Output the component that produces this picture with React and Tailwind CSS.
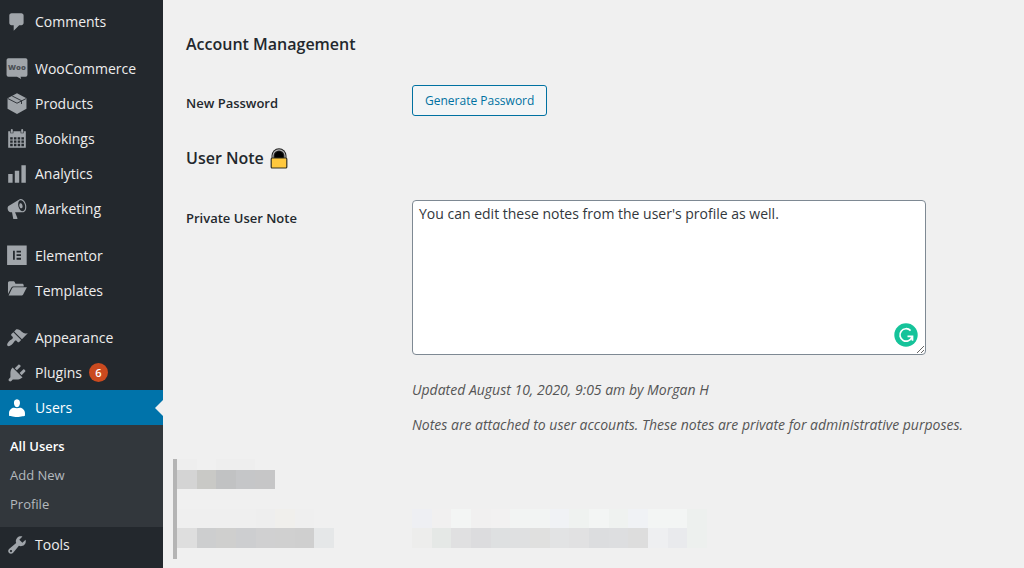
import { useState } from "react";

const Icon = ({ children }) => (
  <svg
    viewBox="0 0 20 20"
    className="h-[22px] w-[22px] shrink-0 fill-current"
    aria-hidden="true"
  >
    {children}
  </svg>
);

const icons = {
  comments: (
    <path d="M5 2h9c1.1 0 2 .9 2 2v7c0 1.1-.9 2-2 2h-2l-5 5v-5H5c-1.1 0-2-.9-2-2V4c0-1.1.9-2 2-2z" />
  ),
  woo: (
    <>
      <path d="M2.2 .2h15.600a1.700 1.700 0 0 1 1.700 1.700v13.400a1.700 1.700 0 0 1-1.700 1.700h-4.600l.6 2.200-3.800-2.200H2.200a1.700 1.700 0 0 1-1.700-1.700V1.900A1.700 1.700 0 0 1 2.200 .2z" />
      <text
        x="10"
        y="11"
        textAnchor="middle"
        fontSize="7"
        fontWeight="800"
        fontFamily="Open Sans, sans-serif"
        fill="#4a4f54"
      >
        Woo
      </text>
    </>
  ),
  products: (
    <>
      <path d="M10 .2l8.600 4.500v9.700L10 19.200l-8.600-4.800V4.700z" />
      <path
        d="M1.600 5L10 9.300l8.400-4.300M5.600 2.700l8.500 4.300v3"
        fill="none"
        stroke="#23282d"
        strokeWidth=".8"
      />
    </>
  ),
  bookings: (
    <path
      fillRule="evenodd"
      d="M2 3h1.900v1.800h2.800V3h6.600v1.800h2.800V3H18v15H2zM4.400 1.900a.9.9 0 0 1 1.800 0v2.400H4.400zm9.400 0a.9.9 0 0 1 1.800 0v2.400h-1.800zM3.800 8.400v2.100h2.300V8.400zm3.400 0v2.100h2.300V8.400zm3.400 0v2.100h2.300V8.400zm3.400 0v2.100h2.300V8.400zM3.800 11.400v2.100h2.300v-2.100zm3.400 0v2.100h2.300v-2.100zm3.400 0v2.100h2.300v-2.100zm3.400 0v2.100h2.300v-2.100zM3.800 14.400v2.100h2.300v-2.100zm3.400 0v2.100h2.300v-2.100zm3.400 0v2.100h2.300v-2.100zm3.400 0v2.100h2.300v-2.100z"
    />
  ),
  analytics: <path d="M18 18V2h-4v16h4zm-6 0V7H8v11h4zm-6 0v-8H2v8h4z" />,
  marketing: (
    <path d="M18.150 5.940c.46 1.620.38 3.220-.02 4.480-.42 1.280-1.260 2.180-2.300 2.480-.16.06-.26.06-.4.06-.06.02-.12.02-.18.02-.06.02-.14.02-.22.02h-6.800l2.220 5.500c.02.14-.06.26-.14.34-.08.1-.24.16-.34.16H6.950c-.1 0-.26-.06-.34-.16-.08-.08-.16-.2-.14-.34l-1-5.500H4.250l-.02-.02c-.5.06-1.080-.18-1.540-.62s-.88-1.080-1.060-1.880c-.24-.8-.2-1.560-.02-2.200.18-.62.58-1.080 1.060-1.300l.02-.02 9-5.400c.1-.06.18-.1.24-.16.06-.04.14-.08.24-.12.16-.08.28-.12.5-.18 1.040-.3 2.240.1 3.220.98s1.840 2.240 2.260 3.860zm-2.580 5.980h-.02c.4-.1.74-.34 1.040-.7.58-.7.86-1.760.86-3.040 0-.64-.1-1.300-.28-1.980-.34-1.360-1.020-2.500-1.780-3.240s-1.680-1.100-2.460-.88c-.82.22-1.400.96-1.700 2-.32 1.040-.28 2.360.06 3.720.38 1.360 1 2.500 1.800 3.240.78.74 1.620 1.100 2.480.88zm-2.540-7.080c.22-.04.42-.02.62.04.38.16.76.48 1.020 1s.42 1.200.42 1.780c0 .3-.04.56-.12.8-.18.48-.44.84-.86.94-.34.1-.8-.06-1.140-.4s-.64-.86-.78-1.500c-.18-.62-.12-1.240.02-1.720s.48-.84.82-.94z" />
  ),
  elementor: (
    <path
      fillRule="evenodd"
      d="M1 .4h17.800v17.800H1zM6.400 5.300v8H8v-8zm3.200 0v1.600h4V5.300zm0 3.200v1.600h4V8.500zm0 3.200v1.600h4v-1.600z"
    />
  ),
  templates: (
    <path d="M1.800 12.800V2.900c0-1 .5-1.700 1.400-1.700h3.400c.8 0 1.200.4 1.500 1l.5 1.100h6c1 0 1.500.6 1.500 1.500v1H7c-1 0-1.700.4-2.200 1.200zM7 6.700h12l-3.400 6.400c-.4.700-.9 1-1.700 1H2.400l3.200-6.600c.3-.5.700-.8 1.400-.8z" />
  ),
  appearance: (
    <path d="M14.480 11.060L7.410 3.990l1.500-1.500c.5-.56 2.300-.47 3.510.32 1.210.8 1.430 1.280 2.910 2.100 1.180.64 2.450 1.260 4.450.85zm-.71.71L6.700 4.700 4.930 6.470c-.39.39-.39 1.020 0 1.410l1.060 1.060c.39.39.39 1.030 0 1.420-.6.6-1.430 1.110-2.210 1.690-.35.26-.7.53-1.010.84C1.430 14.230.4 16.080 1.400 17.070c.99 1 2.840-.03 4.180-1.360.31-.31.58-.66.85-1.020.57-.78 1.080-1.610 1.690-2.210.39-.39 1.020-.39 1.410 0l1.060 1.060c.39.39 1.020.39 1.410 0z" />
  ),
  plugins: (
    <path d="M13.110 4.360L9.870 7.600 8 5.730l3.240-3.240c.35-.34 1.050-.2 1.560.32.52.51.66 1.210.31 1.550zm-8 1.770l.91-1.120 9.010 9.010-1.190.84c-.71.71-2.630 1.160-3.820 1.160H6.140L4.900 17.260c-.59.59-1.540.59-2.120 0-.59-.58-.59-1.530 0-2.120l1.240-1.240v-3.880c0-1.130.4-3.190 1.090-3.890zm7.260 3.970l3.240-3.240c.34-.35 1.040-.21 1.550.31.52.51.66 1.210.31 1.550l-3.240 3.250z" />
  ),
  users: (
    <path d="M10 9.250c-2.270 0-2.730-3.440-2.730-3.440C7 4.020 7.820 2 9.970 2c2.160 0 2.980 2.020 2.710 3.810 0 0-.41 3.440-2.680 3.440zm0 .95L12.720 9.800c2.390 0 4.520 2.530 4.520 4.730v2.490s-3.650 1.130-7.240 1.130c-3.650 0-7.240-1.130-7.240-1.130v-2.490c0-2.250 1.940-4.730 4.470-4.730z" />
  ),
  tools: (
    <path d="M16.680 9.770c-1.340 1.340-3.300 1.670-4.950.99l-5.410 6.520c-.99.99-2.590.99-3.580 0s-.99-2.590 0-3.570l6.520-5.420c-.68-1.650-.35-3.610.99-4.950 1.280-1.280 3.120-1.620 4.720-1.060l-2.890 2.890 2.820 2.820 2.860-2.870c.53 1.580.18 3.390-1.080 4.650zM3.810 16.210c.4.39 1.040.39 1.430 0 .4-.4.4-1.040 0-1.430-.39-.4-1.030-.4-1.430 0-.39.39-.39 1.030 0 1.430z" />
  ),
};

const menu = [
  [{ label: "Comments", icon: "comments" }],
  [
    { label: "WooCommerce", icon: "woo" },
    { label: "Products", icon: "products" },
    { label: "Bookings", icon: "bookings" },
    { label: "Analytics", icon: "analytics" },
    { label: "Marketing", icon: "marketing" },
  ],
  [
    { label: "Elementor", icon: "elementor" },
    { label: "Templates", icon: "templates" },
  ],
  [
    { label: "Appearance", icon: "appearance" },
    { label: "Plugins", icon: "plugins", count: 6 },
    {
      label: "Users",
      icon: "users",
      active: true,
      submenu: ["All Users", "Add New", "Profile"],
    },
    { label: "Tools", icon: "tools" },
  ],
];

function MenuItem({ item }) {
  return (
    <li>
      <a
        href="#"
        className={
          item.active
            ? "relative flex h-[35px] items-center gap-[7px] bg-[#0073aa] pl-1.5 text-white"
            : "flex h-[35px] items-center gap-[7px] pl-1.5 text-[#eeeeee] hover:text-[#00b9eb]"
        }
      >
        <span className={item.active ? "text-white" : "text-[#a0a5aa]"}>
          <Icon>{icons[item.icon]}</Icon>
        </span>
        {item.label}
        {item.count && (
          <span className="flex h-[19px] w-[19px] items-center justify-center rounded-full bg-[#ca4a1f] text-[11px] font-semibold text-white">
            {item.count}
          </span>
        )}
        {item.active && (
          <span className="absolute right-0 top-1/2 -translate-y-1/2 border-8 border-transparent border-r-[#f0f0f0]"></span>
        )}
      </a>
      {item.submenu && (
        <ul className="bg-[#32373c] pb-2 pt-[7px] text-[13px]">
          {item.submenu.map((label, i) => (
            <li key={label}>
              <a
                href="#"
                className={
                  i === 0
                    ? "flex h-[29px] items-center pl-2.5 font-semibold text-white"
                    : "flex h-[29px] items-center pl-2.5 text-[#b4b9be]"
                }
              >
                {label}
              </a>
            </li>
          ))}
        </ul>
      )}
    </li>
  );
}

function Lock() {
  return (
    <svg viewBox="0 0 18 21" className="h-[21px] w-[18px]" aria-hidden="true">
      <path d="M1.500 11V7.700a7.500 7.500 0 0 1 15 0V11z" fill="#222" />
      <path
        d="M3 11V7.800a6 6 0 0 1 12 0V11"
        fill="none"
        stroke="#b5b5b5"
        strokeWidth="1.200"
      />
      <path d="M4.800 11V7.800a4.200 4.200 0 0 1 8.400 0V11z" fill="#000" />
      <rect
        x="1.200"
        y="10"
        width="15.600"
        height="10"
        rx="1"
        fill="#ffc83d"
        stroke="#33301f"
        strokeWidth="1.200"
      />
    </svg>
  );
}

// one tone per redacted block
const Blocks = ({ tones, className }) => (
  <div className={"flex " + className}>
    {tones.map((tone, i) => (
      <span key={i} className="flex-1" style={{ background: tone }}></span>
    ))}
  </div>
);

const bg = "#f0f0f0";
const titleTop = ["#eeeeee", bg, "#eeeeee", "#eeeeee", bg];
const title = ["#d4d4d4", "#c9c9c6", "#c1c2c3", "#c5c6c8", "#c6c6c7"];
const labelTop = ["#efefef", "#efefef", "#efefef", "#efefef", "#eeeeee", "#f0efec", "#efefef", bg];
const label = ["#dedede", "#cdcecf", "#cfcfce", "#cdced0", "#d0d0d1", "#d0d0d0", "#cfcfcf", "#e5e7e8"];
const valueTop = ["#eeeff3", "#f1f0f0", "#f3f5f4", "#f1f0f0", "#f2f1f1", "#f2f4f3", "#f2f4f3", "#f0f2f5", "#eff2f0", "#f3f5f4", "#eff2f0", "#f0f2f5", "#f3f5f4", "#f3f5f4", "#edf0ee"];
const value = ["#ededec", "#e5e8e6", "#e0e0e1", "#dcdcde", "#dee0e1", "#dfe0e1", "#e0e0df", "#e2e3e4", "#e1e1e2", "#dcdddf", "#dddee0", "#dddddd", "#eeeff1", "#e9eaed", "#edf0ee"];

export default function App() {
  const [note, setNote] = useState(
    "You can edit these notes from the user's profile as well."
  );

  return (
    <div className="flex min-h-screen bg-[#f0f0f0] font-['Open_Sans',sans-serif] text-sm text-[#23282d]">
      <nav className="w-[163px] shrink-0 bg-[#23282d] pt-1">
        <div className="flex flex-col gap-3">
          {menu.map((group, i) => (
            <ul key={i}>
              {group.map((item) => (
                <MenuItem key={item.label} item={item} />
              ))}
            </ul>
          ))}
        </div>
      </nav>

      <main className="min-w-0 flex-1 pl-2.5 pt-8">
        <form className="pl-[13px]" onSubmit={(e) => e.preventDefault()}>
          <h2 className="text-base font-semibold leading-6">
            Account Management
          </h2>
          <div className="mt-[29px] flex items-start">
            <div className="w-[226px] shrink-0 pt-2 text-[13px] font-semibold leading-5">
              New Password
            </div>
            <button
              type="button"
              className="h-[31px] rounded-[3px] border border-[#0071a1] bg-[#f3f5f6] px-3 text-xs text-[#0071a1]"
            >
              Generate Password
            </button>
          </div>

          <h2 className="mt-[30px] flex items-center gap-1.5 text-base font-semibold leading-6">
            User Note <Lock />
          </h2>
          <div className="mt-[30px] flex items-start">
            <label
              htmlFor="user-note"
              className="w-[226px] shrink-0 pt-2 text-[13px] font-semibold leading-5"
            >
              Private User Note
            </label>
            <div className="min-w-0 flex-1">
              <div className="relative max-w-[514px]">
                <textarea
                  id="user-note"
                  value={note}
                  onChange={(e) => setNote(e.target.value)}
                  className="block h-[155px] w-full resize rounded border border-[#7e8993] bg-white px-1.5 py-[3px] text-sm leading-5 text-[#32373c]"
                />
                <button
                  type="button"
                  aria-label="Grammarly"
                  className="absolute bottom-2 right-2"
                >
                  <svg viewBox="0 0 24 24" className="h-6 w-6">
                    <circle cx="12" cy="12" r="11.700" fill="#15c39a" />
                    <path
                      d="M16.600 7.600a6.200 6.200 0 1 0 1.400 6.400M13.500 13.400h5v4.300"
                      fill="none"
                      stroke="#fff"
                      strokeWidth="1.700"
                    />
                  </svg>
                </button>
              </div>
              <p className="mt-[25px] italic leading-5 text-[#555555]">
                Updated August 10, 2020, 9:05 am by Morgan H
              </p>
              <p className="mt-[15px] italic leading-5 text-[#555555]">
                Notes are attached to user accounts. These notes are private for
                administrative purposes.
              </p>
            </div>
          </div>
        </form>

        <section className="mt-6 h-[100px] border-l-4 border-[#b4b4b4]">
          <Blocks tones={titleTop} className="h-[11px] w-[98px]" />
          <Blocks tones={title} className="h-[19px] w-[98px]" />
          <div className="mt-5 flex gap-[78px]">
            <div>
              <Blocks tones={labelTop} className="h-[19px] w-[157px]" />
              <Blocks tones={label} className="h-5 w-[157px]" />
            </div>
            <div>
              <Blocks tones={valueTop} className="h-[19px] w-[295px]" />
              <Blocks tones={value} className="h-5 w-[295px]" />
            </div>
          </div>
        </section>
      </main>
    </div>
  );
}
